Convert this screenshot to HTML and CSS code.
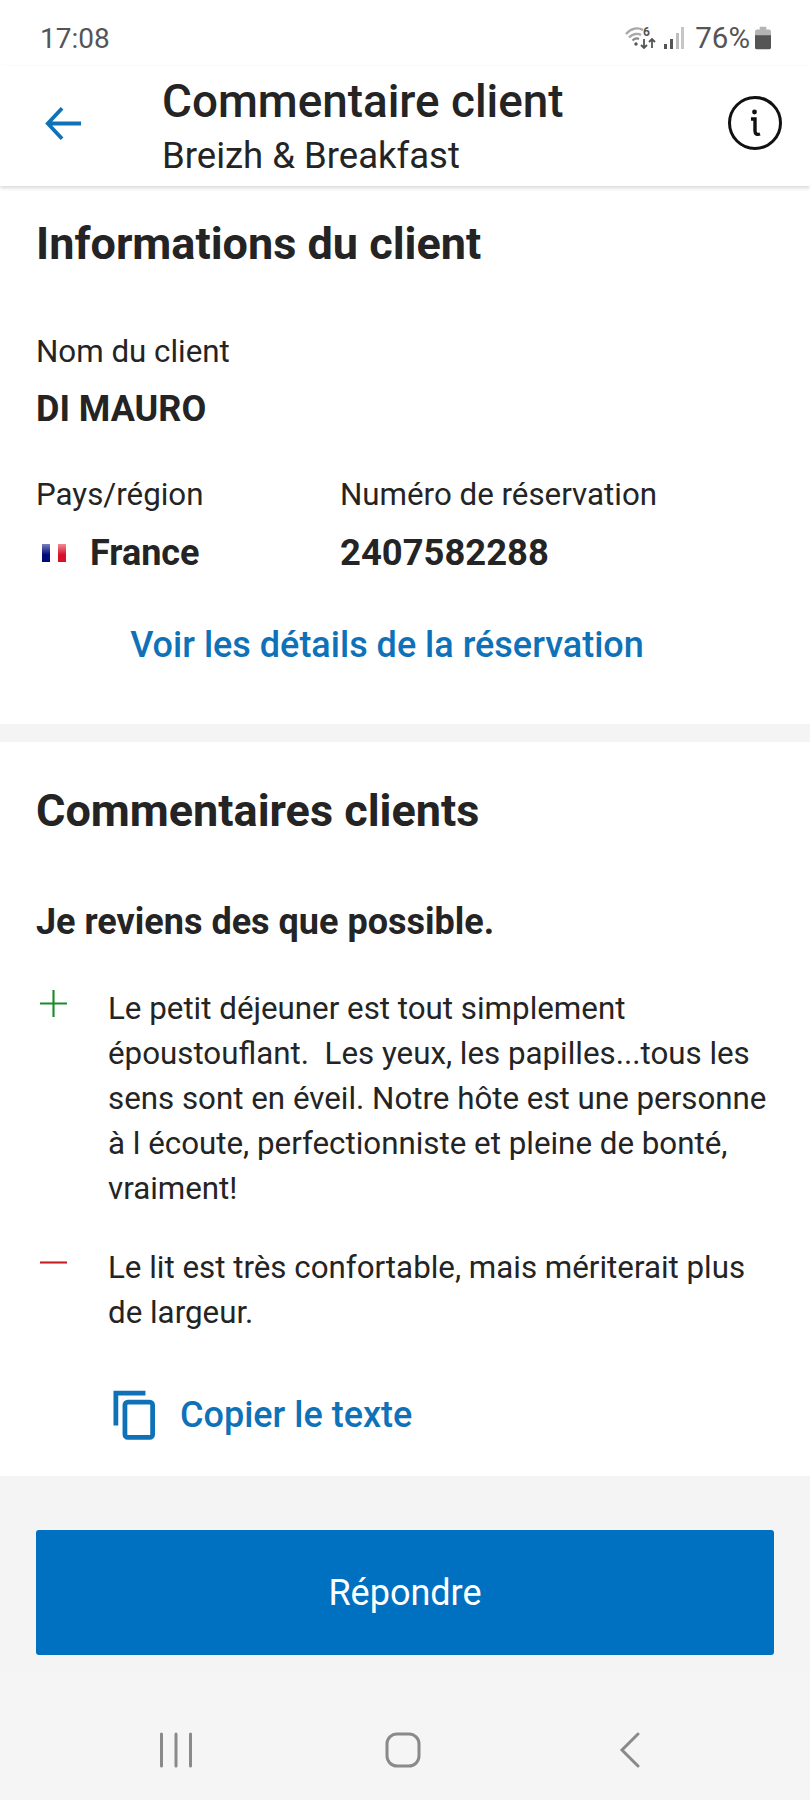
FILE: index.html
```html
<!DOCTYPE html>
<html lang="fr">
<head>
    <meta charset="UTF-8">
    <title>Commentaire client</title>
    <link rel="stylesheet" href="styles.css">
</head>
<body>
    <div class="statusbar">
        <span class="heure">17:08</span>
        <div class="status-icons">
            <svg class="ico-wifi" width="31" height="26" viewBox="0 -4 31 26" fill="none">
                <path d="M1 7C6 1 13 0 18 3" stroke="#a9a9a9" stroke-width="2.4"/>
                <path d="M4 10.5C8 6.5 13 6 16 8" stroke="#a9a9a9" stroke-width="2.4"/>
                <path d="M7.5 13.5C9.5 11.5 12 11 14 12" stroke="#8a8a8a" stroke-width="2.2"/>
                <circle cx="11" cy="17" r="1.7" fill="#555"/>
                <path d="M19 12v9M16 18l3 3 3-3M27 21v-9M24 15l3-3 3 3" stroke="#555" stroke-width="1.8"/>
                <text x="18" y="9" class="wifi-six">6</text>
            </svg>
            <svg class="ico-signal" width="20" height="22" viewBox="0 0 20 22">
                <rect x="0" y="17" width="3" height="5" fill="#555"/>
                <rect x="6" y="12" width="3" height="10" fill="#555"/>
                <rect x="12" y="6" width="3" height="16" fill="#bdbdbd"/>
                <rect x="17" y="0" width="3" height="22" fill="#c6c6c6"/>
            </svg>
            <span class="batterie-pct">76%</span>
            <svg class="ico-batterie" width="16" height="24" viewBox="0 0 17 24">
                <path d="M5 0h7v3h3a2 2 0 0 1 2 2v5H0V5a2 2 0 0 1 2-2h3z" fill="#b4b4b4"/>
                <path d="M0 9h17v13a2 2 0 0 1-2 2H2a2 2 0 0 1-2-2z" fill="#555"/>
            </svg>
        </div>
    </div>

    <div class="appbar">
        <button class="btn-retour" title="Retour">
            <svg width="38" height="37" viewBox="0 0 40 36" fill="none" stroke="#0f72b8" stroke-width="4">
                <path d="M39 18H5M19 2 4 18l15 16"/>
            </svg>
        </button>
        <div class="appbar-titres">
            <div class="titre">Commentaire client</div>
            <div class="sous-titre">Breizh &amp; Breakfast</div>
        </div>
        <button class="btn-info" title="Informations">
            <svg width="56" height="56" viewBox="0 0 56 56" fill="none" stroke="#111" stroke-width="3">
                <circle cx="28" cy="28" r="25.5"/>
                <path d="M24 24h4v12c0 3 2 4 5 3" stroke-width="3.4"/>
                <circle cx="27.5" cy="17" r="2.4" fill="#111" stroke="none"/>
            </svg>
        </button>
    </div>

    <div class="section section-client">
        <h2>Informations du client</h2>
        <div class="champ champ-nom">
            <div class="label">Nom du client</div>
            <div class="valeur">DI MAURO</div>
        </div>
        <div class="champs-ligne">
            <div class="champ champ-pays">
                <div class="label">Pays/région</div>
                <div class="valeur valeur-pays">
                    <svg class="drapeau" width="24" height="18" viewBox="0 0 24 18">
                        <defs>
                            <linearGradient id="fondu-bleu" x1="0" y1="0" x2="0" y2="1">
                                <stop offset="0" stop-color="#7a7fbc"/>
                                <stop offset="0.6" stop-color="#000a7c"/>
                            </linearGradient>
                            <linearGradient id="fondu-rouge" x1="0" y1="0" x2="0" y2="1">
                                <stop offset="0" stop-color="#ee8c92"/>
                                <stop offset="0.6" stop-color="#d8102c"/>
                            </linearGradient>
                        </defs>
                        <rect width="8" height="18" fill="url(#fondu-bleu)"/>
                        <rect x="16" width="8" height="18" fill="url(#fondu-rouge)"/>
                    </svg>
                    France
                </div>
            </div>
            <div class="champ">
                <div class="label">Numéro de réservation</div>
                <div class="valeur valeur-num">2407582288</div>
            </div>
        </div>
        <a class="lien-details">Voir les détails de la réservation</a>
    </div>

    <div class="section section-commentaires">
        <h2>Commentaires clients</h2>
        <div class="resume">Je reviens des que possible.</div>
        <div class="avis">
            <svg class="avis-signe" width="27" height="27" viewBox="0 0 28 28" stroke="#1b8a2a" stroke-width="2.2">
                <path d="M0 14h28M14 0v28"/>
            </svg>
            <p>Le petit déjeuner est tout simplement époustouflant.&nbsp; Les yeux, les papilles...tous les sens sont en éveil. Notre hôte est une personne à l écoute, perfectionniste et pleine de bonté, vraiment!</p>
        </div>
        <div class="avis">
            <svg class="avis-signe" width="27" height="27" viewBox="0 0 28 28" stroke="#c62026" stroke-width="2.2">
                <path d="M0 14h28"/>
            </svg>
            <p>Le lit est très confortable, mais mériterait plus de largeur.</p>
        </div>
        <a class="lien-copier">
            <svg width="42" height="50" viewBox="0 0 44 52" fill="none" stroke="#0f72b8" stroke-width="5">
                <path d="M34 3H3v34"/>
                <rect x="12.5" y="12.5" width="29" height="37" rx="3"/>
            </svg>
            Copier le texte
        </a>
    </div>

    <div class="pied">
        <button class="btn-repondre">Répondre</button>
    </div>

    <div class="navbar">
        <svg width="36" height="36" viewBox="0 0 36 36" stroke="#8a8a8a" stroke-width="3" stroke-linecap="round">
            <path d="M3.5 2v32M18 2v32M32.5 2v32"/>
        </svg>
        <svg width="36" height="36" viewBox="0 0 36 36" fill="none" stroke="#8a8a8a" stroke-width="3">
            <rect x="2" y="2" width="32" height="32" rx="10"/>
        </svg>
        <svg class="nav-retour" width="24" height="36" viewBox="0 0 24 36" fill="none" stroke="#8a8a8a" stroke-width="3" stroke-linecap="round">
            <path d="M20 2 4 18l16 16"/>
        </svg>
    </div>
</body>
</html>
```
FILE: styles.css
```css
body {
    margin: 0;
    min-height: 100vh;
    display: flex;
    flex-direction: column;
    background: #f4f4f4;
    color: #242424;
    font-family: Roboto, 'Liberation Sans', sans-serif;
}
button {
    font-family: inherit;
    background: none;
    border: none;
    padding: 0;
}
/* Barre d'etat */
.statusbar {
    height: 66px;
    background: #fff;
    display: flex;
    justify-content: space-between;
    align-items: center;
    padding: 10px 39px 0 40px;
    box-sizing: border-box;
    color: #555;
    font-size: 28px;
}
.status-icons {
    display: flex;
    align-items: center;
    gap: 8px;
}
.ico-wifi {
    margin-bottom: 4px;
}
.wifi-six {
    font-size: 12px;
    font-weight: bold;
    fill: #555;
}
.batterie-pct {
    margin-left: 3px;
    font-size: 29.5px;
}
.ico-batterie {
    margin-left: -3px;
}
/* Barre de titre */
.appbar {
    height: 120px;
    background: #fff;
    display: flex;
    align-items: center;
    position: relative;
    box-shadow: 0 2px 4px rgba(0,0,0,0.16);
    padding: 0 27px 0 44px;
    box-sizing: border-box;
}
.btn-retour {
    width: 118px;
    display: flex;
    margin-bottom: 6px;
}
.appbar-titres {
    flex: 1;
    padding-top: 5px;
}
.titre {
    font-size: 45.8px;
    font-weight: 500;
    line-height: 54px;
}
.sous-titre {
    font-size: 36.5px;
    line-height: 53px;
}
.btn-info {
    display: flex;
    margin-bottom: 6px;
}
/* Sections */
.section {
    background: #fff;
    padding: 0 36px;
}
.section h2 {
    margin: 0;
    font-size: 45px;
    font-weight: 700;
    line-height: 54px;
}
.section-client {
    padding-top: 31px;
    padding-bottom: 57px;
    margin-bottom: 18px;
}
.champ {
    margin-top: 42px;
}
.champ-nom {
    margin-top: 59px;
}
.label {
    font-size: 31.3px;
    line-height: 44px;
}
.valeur {
    font-size: 36px;
    font-weight: 700;
    line-height: 44px;
    margin-top: 14px;
}
.champ-nom .valeur {
    margin-top: 13px;
}
.valeur-num {
    font-size: 36.4px;
}
.champs-ligne {
    display: flex;
}
.champ-pays {
    width: 304px;
}
.valeur-pays {
    display: flex;
    align-items: center;
    gap: 24px;
}
.drapeau {
    margin-left: 6px;
}
.lien-details {
    display: block;
    margin: 48px 36px 0 0;
    text-align: center;
    color: #0f72b8;
    font-size: 36px;
    font-weight: 500;
    line-height: 44px;
}
.section-commentaires {
    padding-top: 42px;
    padding-bottom: 36px;
}
.resume {
    margin-top: 62px;
    font-size: 36px;
    font-weight: 700;
    line-height: 44px;
}
.avis {
    display: flex;
    margin-top: 42px;
    gap: 41px;
}
.avis + .avis {
    margin-top: 34px;
}
.avis-signe {
    flex: none;
    margin: 4px 0 0 4px;
}
.avis p {
    margin: 0;
    font-size: 31.3px;
    line-height: 45px;
    max-width: 670px;
}
.lien-copier {
    display: flex;
    align-items: center;
    gap: 25px;
    margin: 55px 0 0 77px;
    color: #0f72b8;
    font-size: 36px;
    font-weight: 500;
}
/* Bouton du bas */
.pied {
    padding: 54px 36px 0;
}
.btn-repondre {
    display: block;
    width: 100%;
    height: 125px;
    background: #0070c0;
    color: #fff;
    font-size: 36px;
    border-radius: 3px;
}
.navbar {
    margin-top: auto;
    height: 128px;
    background: #f5f5f5;
    display: flex;
    align-items: center;
    gap: 191px;
    padding: 27px 0 0 158px;
    box-sizing: border-box;
}
.nav-retour {
    margin-left: 6px;
}
```
